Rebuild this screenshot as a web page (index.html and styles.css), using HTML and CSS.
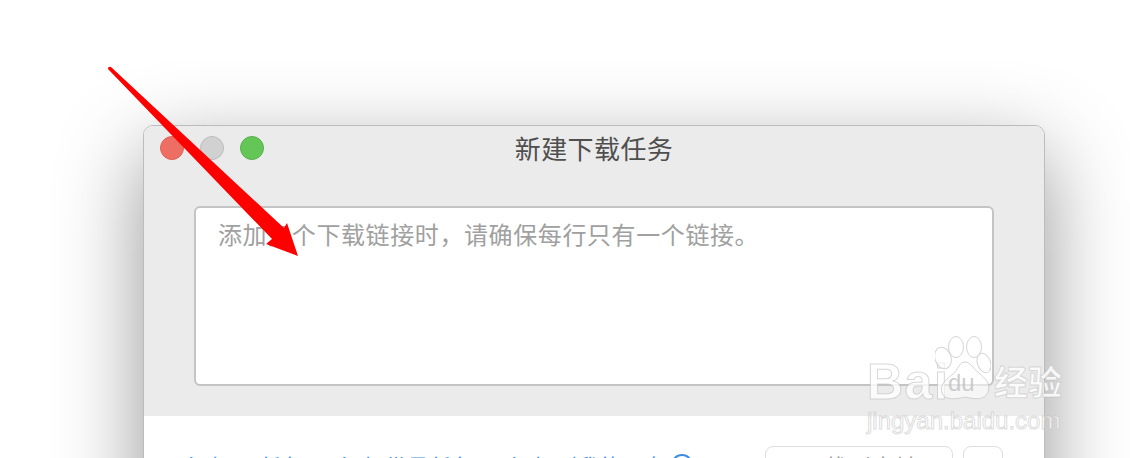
FILE: index.html
```html
<!DOCTYPE html>
<html lang="zh-CN">
<head>
<meta charset="utf-8">
<title>新建下载任务</title>
<link rel="stylesheet" href="styles.css">
</head>
<body>
<div class="window">
  <div class="top">
    <header class="titlebar">
      <div class="lights">
        <span class="light red"></span>
        <span class="light gray"></span>
        <span class="light green"></span>
      </div>
      <div class="title">新建下载任务</div>
    </header>
    <div class="input">添加多个下载链接时，请确保每行只有一个链接。</div>
  </div>
  <div class="bottom">
    <div class="links">
      <span class="link">添加BT任务</span>
      <span class="link">添加带号任务</span>
      <span class="group">
        <span class="link">添加到我的云盘</span>
        <span class="info">i</span>
      </span>
    </div>
    <div class="actions">
      <button class="btn main">下载到本地</button>
      <button class="btn small"></button>
    </div>
  </div>
</div>

<svg class="arrow" width="1130" height="458" viewBox="0 0 1130 458" aria-hidden="true">
  <path d="M108 69 Q108 66 111 67 L284 228 L287 223 L298 256 L266 244 L272 239 Z" fill="#fe0000"/>
</svg>

<div class="watermark">
  <div class="brand">
    <span class="bai">Bai</span>
    <svg class="paw" width="56" height="66" viewBox="0 0 56 66" aria-hidden="true">
      <g fill="#fff" fill-opacity=".55" stroke="#c9c9c9" stroke-opacity=".8" stroke-width="1">
        <ellipse cx="8" cy="22" rx="8" ry="11" transform="rotate(-18 8 22)"/>
        <ellipse cx="21" cy="11" rx="7.500" ry="10.500"/>
        <ellipse cx="39" cy="11" rx="7.500" ry="10.500"/>
        <ellipse cx="49" cy="27" rx="6.500" ry="10" transform="rotate(-20 49 27)"/>
        <path d="M30 26 C36 26 38 33 44 37 C50 42 56 48 53 56 C50 65 38 63 30 61 C22 63 10 65 7 57 C4 48 13 42 18 38 C23 34 24 26 30 26 Z"/>
      </g>
      <text class="du" x="13" y="55">du</text>
    </svg>
    <span class="jingyan">经验</span>
  </div>
  <div class="domain">jingyan.baidu.com</div>
</div>
</body>
</html>
```

FILE: styles.css
```css
* { box-sizing: border-box; }

html, body {
  margin: 0;
  height: 458px;
  overflow: hidden;
  background: #fff;
}

body {
  position: relative;
  padding: 125px 85px 0 143px;
  font-family: "Noto Sans CJK SC", "Liberation Sans", sans-serif;
}

.window {
  width: 902px;
  height: 500px;
  border: 1px solid #bcbcbc;
  border-radius: 10px 10px 0 0;
  background: #fff;
  box-shadow: 0 28px 85px rgba(0, 0, 0, .42);
  overflow: hidden;
}

.top {
  height: 290px;
  background: #ebebeb;
  padding-bottom: 30px;
  display: flex;
  flex-direction: column;
}

.titlebar {
  height: 80px;
  flex: none;
  position: relative;
  display: flex;
  justify-content: center;
  padding-top: 2px;
}

.title {
  font-size: 26px;
  line-height: 40px;
  letter-spacing: .4px;
  color: #4f4f4f;
}

.lights {
  position: absolute;
  left: 16px;
  top: 10px;
  display: flex;
  gap: 16px;
}

.light {
  width: 24px;
  height: 24px;
  border-radius: 50%;
  border: 1px solid transparent;
}

.red { background: #ee6e64; border-color: #de6158; }
.gray { background: #d1d1d1; border-color: #bdbdbd; }
.green { background: #64c656; border-color: #55b049; }

.input {
  margin: 0 50px;
  height: 180px;
  background: #fff;
  border: 2px solid #c4c4c4;
  border-radius: 6px;
  padding: 8px 22px;
  font-size: 24px;
  line-height: 36px;
  letter-spacing: .6px;
  color: #a0a0a0;
}

.bottom {
  display: flex;
  justify-content: space-between;
  padding: 30px 41px 0 44px;
}

.links {
  display: flex;
  gap: 38px;
  padding-top: 3px;
  font-size: 22px;
  line-height: 32px;
  color: #4a90e8;
}

.group {
  display: flex;
  gap: 6px;
}

.info {
  width: 22px;
  height: 22px;
  margin-top: 5px;
  border: 2px solid #3d8ae6;
  border-radius: 50%;
  font-size: 14px;
  line-height: 18px;
  text-align: center;
}

.actions {
  display: flex;
  gap: 10px;
}

.btn {
  height: 48px;
  background: #fff;
  border: 1px solid #dedede;
  border-radius: 8px;
  font-family: inherit;
  font-size: 24px;
  line-height: 34px;
  color: #9a9a9a;
  padding: 0 0 6px;
}

.main { width: 188px; }
.small { width: 40px; }

.arrow {
  position: absolute;
  left: 0;
  top: 0;
}

.watermark {
  position: absolute;
  left: 867px;
  top: 336px;
  width: 204px;
  color: #fff;
}

.brand {
  display: flex;
  align-items: flex-end;
  height: 66px;
}

.bai {
  font-family: "Liberation Sans", sans-serif;
  font-weight: 700;
  font-size: 50px;
  line-height: 56px;
  height: 56px;
  width: 68px;
  margin-bottom: -8px;
  letter-spacing: 1.500px;
  color: rgba(255, 255, 255, .8);
  -webkit-text-stroke: 1px rgba(190, 190, 190, .6);
}

.paw {
  flex: none;
  margin-right: 3px;
}

.du {
  font-family: "Liberation Sans", sans-serif;
  font-size: 24px;
  fill: #bdbdbd;
  fill-opacity: .75;
  stroke: none;
}

.jingyan {
  font-size: 34px;
  line-height: 44px;
  margin-left: 0;
  margin-bottom: -1px;
  font-weight: 700;
  white-space: nowrap;
  color: rgba(255, 255, 255, .85);
  -webkit-text-stroke: 1px rgba(190, 190, 190, .55);
}

.domain {
  font-family: "Liberation Sans", sans-serif;
  font-size: 24px;
  line-height: 30px;
  margin-top: 4px;
  color: rgba(255, 255, 255, .8);
  -webkit-text-stroke: 1px rgba(190, 190, 190, .55);
  white-space: nowrap;
}
```
